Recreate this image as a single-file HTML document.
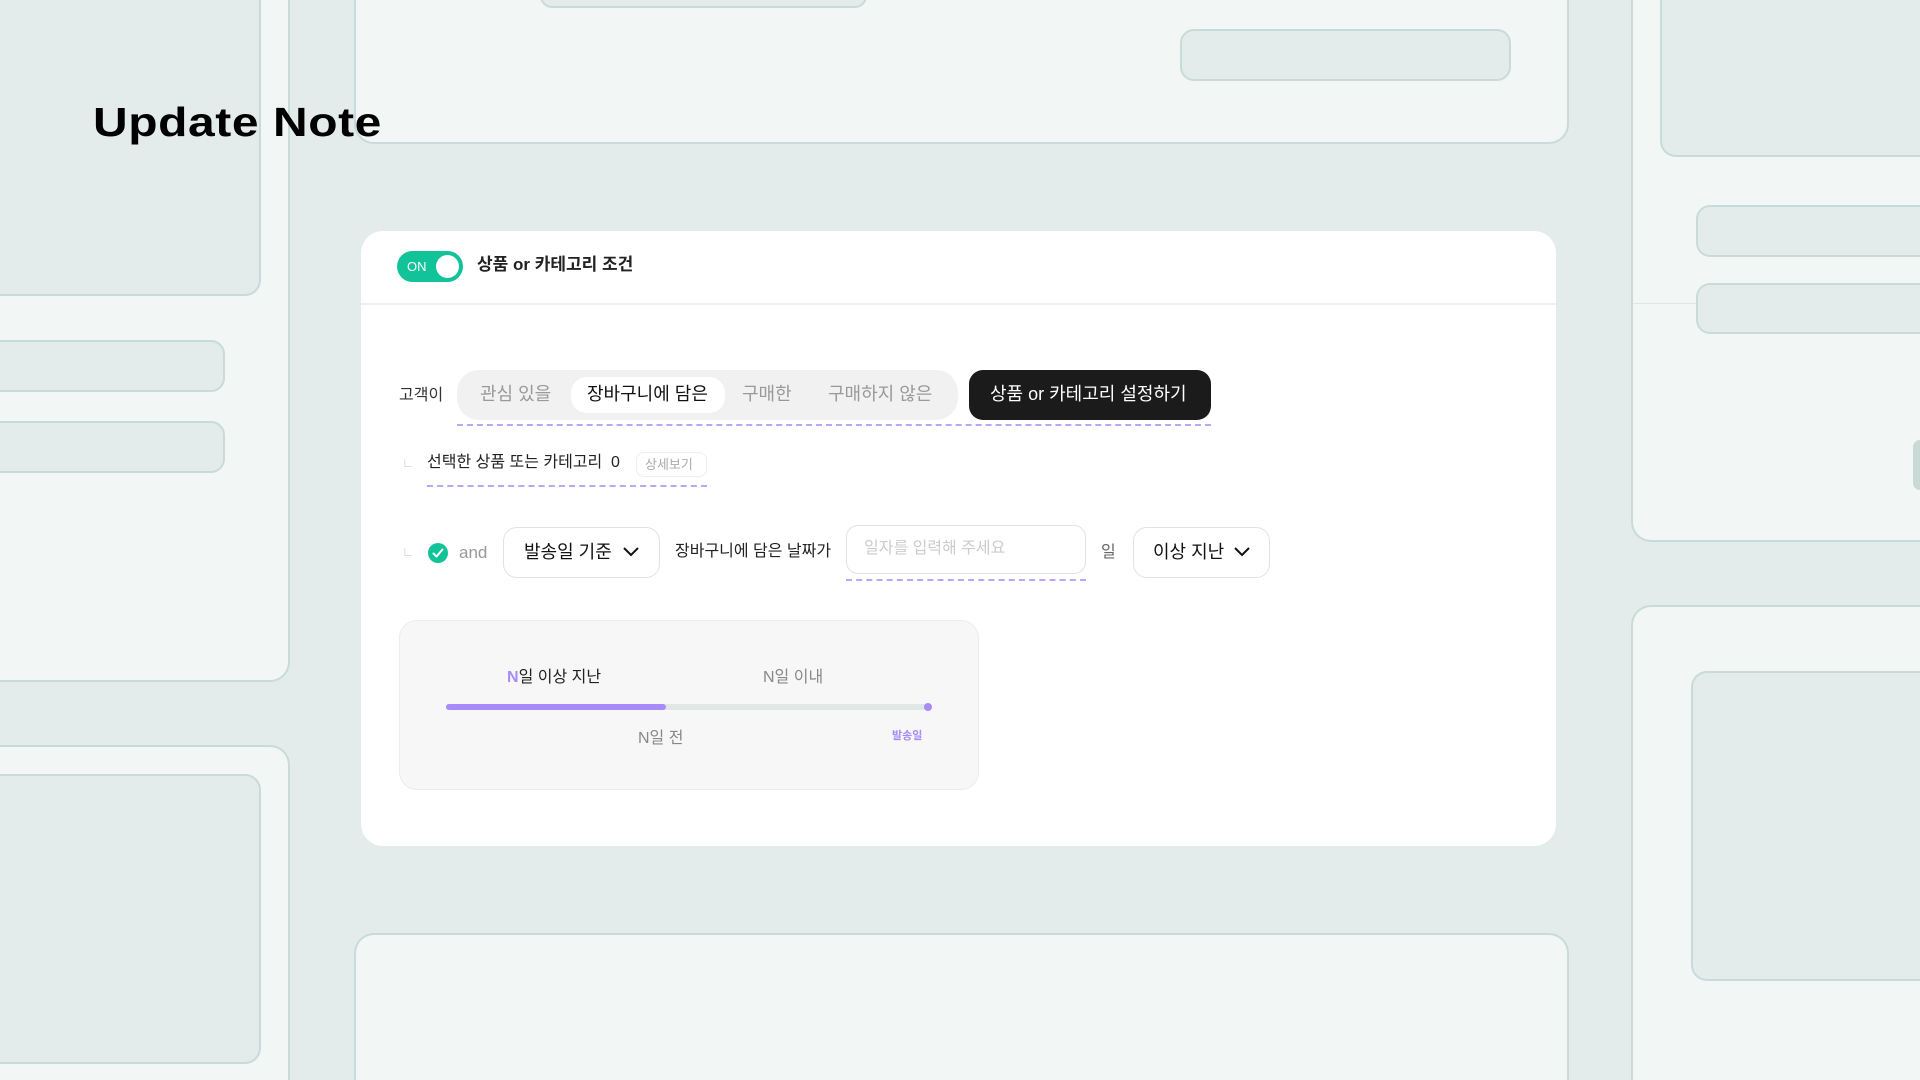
<!DOCTYPE html>
<html><head><meta charset="utf-8"><style>
*{box-sizing:border-box;margin:0;padding:0}
html,body{width:1920px;height:1080px;overflow:hidden}
body{font-family:"Liberation Sans","Noto Sans CJK KR",sans-serif;color:#222}
#w{position:relative;width:1920px;height:1080px;overflow:hidden;background:#e3ecea}
.a{position:absolute}
.lp{position:absolute;background:#f2f6f5;border:2px solid #c9dbd8}
.dk{position:absolute;background:#e3ecea;border:2px solid #c9dbd8}
.t{position:absolute;white-space:nowrap;line-height:1}
.dash{position:absolute;height:0;border-top:2px dashed #b9a6f5}
</style></head><body><div id="w">
<div class="lp" style="left:-20px;top:-20px;width:310px;height:702px;border-radius:0 0 20px 0"></div>
<div class="dk" style="left:-20px;top:-20px;width:281px;height:316px;border-radius:0 0 16px 0"></div>
<div class="dk" style="left:-20px;top:340px;width:245px;height:52px;border-radius:0 14px 14px 0"></div>
<div class="dk" style="left:-20px;top:421px;width:245px;height:52px;border-radius:0 14px 14px 0"></div>
<div class="lp" style="left:-20px;top:745px;width:310px;height:335px;border-bottom:none;border-radius:0 20px 0 0"></div>
<div class="dk" style="left:-20px;top:774px;width:281px;height:290px;border-radius:0 16px 16px 0"></div>

<div class="lp" style="left:354px;top:-20px;width:1215px;height:164px;border-radius:0 0 20px 20px"></div>
<div class="dk" style="left:540px;top:-20px;width:327px;height:28px;border-radius:0 0 12px 12px"></div>
<div class="dk" style="left:1180px;top:29px;width:331px;height:52px;border-radius:14px"></div>

<div class="lp" style="left:1631px;top:-20px;width:289px;height:562px;border-right:none;border-radius:0 0 0 20px"></div>
<div class="dk" style="left:1660px;top:-20px;width:260px;height:177px;border-right:none;border-radius:0 0 0 16px"></div>
<div class="dk" style="left:1696px;top:205px;width:224px;height:52px;border-right:none;border-radius:14px 0 0 14px"></div>
<div class="dk" style="left:1696px;top:283px;width:224px;height:51px;border-right:none;border-radius:14px 0 0 14px"></div>
<div class="a" style="left:1633px;top:303px;width:63px;height:1px;background:#e0e6e5"></div>
<div class="a" style="left:1913px;top:440px;width:7px;height:50px;border-radius:14px 0 0 14px;background:#c8d9d6"></div>
<div class="lp" style="left:1631px;top:605px;width:289px;height:475px;border-right:none;border-bottom:none;border-radius:20px 0 0 0"></div>
<div class="dk" style="left:1691px;top:671px;width:229px;height:310px;border-right:none;border-radius:16px 0 0 16px"></div>

<div class="lp" style="left:354px;top:933px;width:1215px;height:147px;border-bottom:none;border-radius:20px 20px 0 0"></div>

<div class="t" style="left:93px;top:102px;font-size:41px;font-weight:bold;color:#000;transform:scaleX(1.17);transform-origin:left;letter-spacing:0.5px">Update Note</div>

<div class="a" style="left:361px;top:231px;width:1195px;height:615px;background:#fff;border-radius:22px"></div>
<div class="a" style="left:361px;top:303px;width:1195px;height:2px;background:#f0f0f0"></div>
<div class="a" style="left:397px;top:251px;width:66px;height:31px;border-radius:16px;background:#12c39a"></div>
<div class="t" style="left:407px;top:260px;font-size:13px;color:#fff">ON</div>
<div class="a" style="left:436px;top:255px;width:23px;height:23px;border-radius:50%;background:#fff"></div>
<div class="t" style="left:477px;top:256px;font-size:17px;font-weight:bold;color:#222">상품 or 카테고리 조건</div>

<div class="t" style="left:399px;top:388px;font-size:16px;color:#333">고객이</div>
<div class="a" style="left:457px;top:370px;width:501px;height:50px;border-radius:22px;background:#f1f1f1"></div>
<div class="a" style="left:571px;top:377px;width:154px;height:36px;border-radius:16px;background:#fff"></div>
<div class="t" style="left:480px;top:385px;font-size:18px;color:#999">관심 있을</div>
<div class="t" style="left:587px;top:385px;font-size:18px;color:#111">장바구니에 담은</div>
<div class="t" style="left:742px;top:385px;font-size:18px;color:#999">구매한</div>
<div class="t" style="left:828px;top:385px;font-size:18px;color:#999">구매하지 않은</div>
<div class="a" style="left:969px;top:370px;width:242px;height:50px;border-radius:14px;background:#1b1b1b"></div>
<div class="t" style="left:990px;top:385px;font-size:18px;color:#fff">상품 or 카테고리 설정하기</div>
<div class="dash" style="left:457px;top:424px;width:754px"></div>

<div class="t" style="left:402px;top:456px;font-size:13px;color:#ccc">∟</div>
<div class="t" style="left:427px;top:455px;font-size:16px;color:#222">선택한 상품 또는 카테고리</div>
<div class="t" style="left:611px;top:455px;font-size:16px;color:#222">0</div>
<div class="a" style="left:636px;top:452px;width:71px;height:25px;border:1px solid #eee;border-radius:8px"></div>
<div class="t" style="left:645px;top:458px;font-size:13px;color:#aaa">상세보기</div>
<div class="dash" style="left:427px;top:485px;width:280px"></div>

<div class="t" style="left:402px;top:545px;font-size:13px;color:#ccc">∟</div>
<div class="a" style="left:428px;top:543px;width:20px;height:20px;border-radius:50%;background:#12c39a"></div>
<svg class="a" style="left:428px;top:543px" width="20" height="20"><path d="M5.5 10.5l3 3 6-7" stroke="#fff" stroke-width="2" fill="none" stroke-linecap="round" stroke-linejoin="round"/></svg>
<div class="t" style="left:459px;top:544px;font-size:17px;color:#999">and</div>
<div class="a" style="left:503px;top:527px;width:157px;height:51px;border:1px solid #e2e2e2;border-radius:14px"></div>
<div class="t" style="left:524px;top:543px;font-size:18px;color:#111">발송일 기준</div>
<svg class="a" style="left:622px;top:545px" width="18" height="14"><path d="M2 3l7 7 7-7" stroke="#111" stroke-width="2" fill="none"/></svg>
<div class="t" style="left:675px;top:544px;font-size:16px;color:#222">장바구니에 담은 날짜가</div>
<div class="a" style="left:846px;top:525px;width:240px;height:49px;border:1px solid #e2e2e2;border-radius:12px"></div>
<div class="t" style="left:864px;top:541px;font-size:16px;color:#ccc">일자를 입력해 주세요</div>
<div class="dash" style="left:846px;top:579px;width:240px"></div>
<div class="t" style="left:1101px;top:545px;font-size:16px;color:#666">일</div>
<div class="a" style="left:1133px;top:527px;width:137px;height:51px;border:1px solid #e2e2e2;border-radius:14px"></div>
<div class="t" style="left:1153px;top:543px;font-size:18px;color:#111">이상 지난</div>
<svg class="a" style="left:1233px;top:545px" width="18" height="14"><path d="M2 3l7 7 7-7" stroke="#111" stroke-width="2" fill="none"/></svg>

<div class="a" style="left:399px;top:620px;width:580px;height:170px;background:#f7f7f7;border:1px solid #ececec;border-radius:18px"></div>
<div class="t" style="left:507px;top:670px;font-size:16px;color:#222"><span style="color:#a78bfa;font-weight:bold">N</span>일 이상 지난</div>
<div class="t" style="left:763px;top:670px;font-size:16px;color:#888">N일 이내</div>
<div class="a" style="left:446px;top:704px;width:482px;height:6px;border-radius:3px;background:#e1e7e5"></div>
<div class="a" style="left:446px;top:704px;width:220px;height:6px;border-radius:3px;background:#a78bfa"></div>
<div class="a" style="left:924px;top:703px;width:8px;height:8px;border-radius:50%;background:#a78bfa"></div>
<div class="t" style="left:638px;top:731px;font-size:16px;color:#888">N일 전</div>
<div class="t" style="left:892px;top:731px;font-size:11px;color:#a78bfa;font-weight:bold">발송일</div>
</div></body></html>
